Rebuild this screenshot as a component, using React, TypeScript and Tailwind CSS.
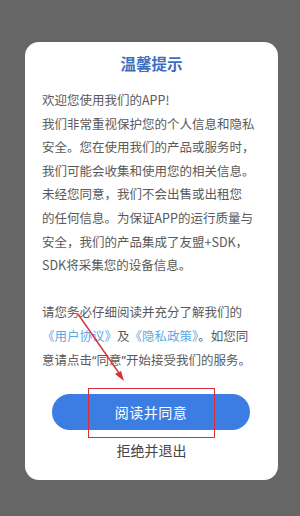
import React from 'react';

/* 正文行（按截图的换行位置逐行写出） */
const LINES_TOP = [
  '欢迎您使用我们的APP!',
  '我们非常重视保护您的个人信息和隐私',
  '安全。您在使用我们的产品或服务时，',
  '我们可能会收集和使用您的相关信息。',
  '未经您同意，我们不会出售或出租您',
  '的任何信息。为保证APP的运行质量与',
  '安全，我们的产品集成了友盟+SDK，',
  'SDK将采集您的设备信息。',
];

const Q = ({ c }: { c: string }) => (
  <span style={{ fontFamily: '"Noto Sans", sans-serif' }}>{c}</span>
);

export default function App() {
  return (
    <div
      className="relative w-[300px] h-[516px] bg-[#666666] pt-[42px] pl-[25px]"
      style={{ fontFamily: '"Noto Sans CJK SC", "Noto Sans", sans-serif' }}
    >
      {/* 弹窗卡片 */}
      <div className="w-[253px] h-[438px] bg-white rounded-[14px] pt-[10px] flex flex-col">
        <h1 className="text-center text-[15.5px] leading-[22px] font-semibold text-[#3d6ec2]">温馨提示</h1>

        <div className="mt-[14px] pl-[17px] pr-[12px] text-[12.5px] leading-[23.6px] text-[#5a5a5a] whitespace-nowrap">
          {LINES_TOP.map((l) => (
            <div key={l}>{l}</div>
          ))}
          <div>&nbsp;</div>
          <div>请您务必仔细阅读并充分了解我们的</div>
          <div>
            <span className="text-[#5aaae6]">《用户协议》</span>及
            <span className="text-[#5aaae6]">《隐私政策》</span>。如您同
          </div>
          <div>
            意请点击<Q c="“" />同意<Q c="”" />开始接受我们的服务。
          </div>
        </div>

        <button className="mt-[22px] ml-[27px] w-[198px] h-[36px] rounded-full bg-[#3b7de3] text-white text-[14px] tracking-[0.5px]">
          阅读并同意
        </button>
        <div className="mt-[10px] text-center text-[14px] leading-[20px] text-[#444444]">拒绝并退出</div>
      </div>

      {/* 标注：红框 + 箭头 */}
      <div className="absolute left-[88px] top-[388px] w-[127px] h-[50px] border-[1.5px] border-[#d8303a]" />
      <svg className="absolute left-0 top-0" width="300" height="516" viewBox="0 0 300 516">
        <line x1="78" y1="314" x2="121" y2="376" stroke="#d8303a" strokeWidth="1.4" />
        <polygon points="124,381 115,374 121,371" fill="#d8303a" />
      </svg>
    </div>
  );
}
